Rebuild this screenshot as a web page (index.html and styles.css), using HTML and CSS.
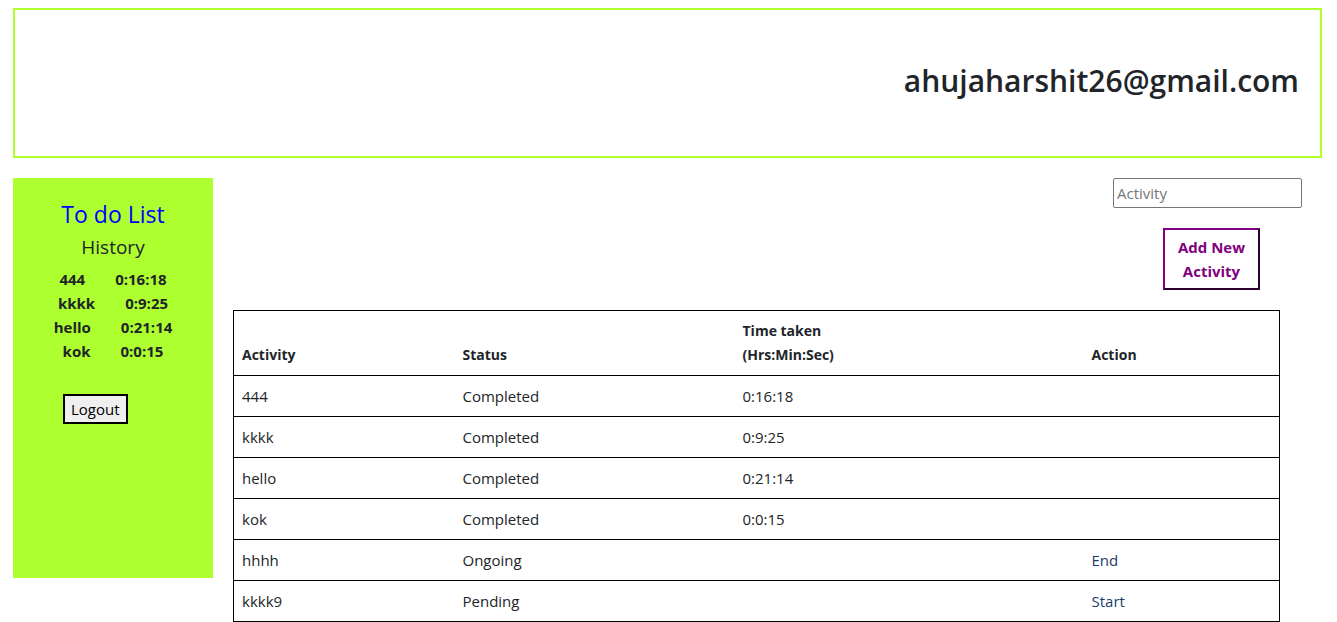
FILE: index.html
```html
<!DOCTYPE html>
<html>
<head>
<meta charset="utf-8">
<link rel="stylesheet" href="styles.css">
</head>
<body>
<header class="top">
  <h1 class="email">ahujaharshit26@gmail.com</h1>
</header>
<div class="layout">
  <aside class="side">
    <h2 class="title">To do List</h2>
    <h3 class="history">History</h3>
    <ul class="hist-list">
      <li><span>444</span><span>0:16:18</span></li>
      <li><span>kkkk</span><span>0:9:25</span></li>
      <li><span>hello</span><span>0:21:14</span></li>
      <li><span>kok</span><span>0:0:15</span></li>
    </ul>
    <button class="logout">Logout</button>
  </aside>
  <main class="main">
    <div class="controls">
      <input class="activity-input" type="text" placeholder="Activity">
      <button class="add-btn">Add New<br>Activity</button>
    </div>
    <table class="tbl">
      <thead>
        <tr>
          <th class="c1">Activity</th>
          <th class="c2">Status</th>
          <th class="c3">Time taken<br>(Hrs:Min:Sec)</th>
          <th class="c4">Action</th>
        </tr>
      </thead>
      <tbody>
        <tr><td>444</td><td>Completed</td><td>0:16:18</td><td></td></tr>
        <tr><td>kkkk</td><td>Completed</td><td>0:9:25</td><td></td></tr>
        <tr><td>hello</td><td>Completed</td><td>0:21:14</td><td></td></tr>
        <tr><td>kok</td><td>Completed</td><td>0:0:15</td><td></td></tr>
        <tr><td>hhhh</td><td>Ongoing</td><td></td><td class="act">End</td></tr>
        <tr><td>kkkk9</td><td>Pending</td><td></td><td class="act">Start</td></tr>
      </tbody>
    </table>
  </main>
</div>
</body>
</html>
```

FILE: styles.css
```css
* { box-sizing: border-box; }
html, body { margin: 0; padding: 0; }
body {
  font-family: "Open Sans", "Noto Sans", sans-serif;
  font-size: 15px;
  line-height: 24px;
  color: #212529;
  background: #fff;
  padding: 8px 15px 0 13px;
}
.top {
  height: 150px;
  border: 2px solid #adff2f;
  display: flex;
  align-items: center;
  justify-content: flex-end;
  padding: 0 21px 4px 0;
}
.email {
  margin: 0;
  font-size: 30px;
  font-weight: 600;
  line-height: 36px;
  letter-spacing: 0;
}
.layout {
  display: flex;
  margin-top: 20px;
  align-items: flex-start;
}
.side {
  width: 200px;
  height: 400px;
  flex: none;
  background: #adff2f;
  text-align: center;
  padding-top: 20px;
}
.title {
  margin: 0;
  font-size: 23px;
  font-weight: 400;
  color: #0000ff;
  line-height: 32px;
}
.history {
  margin: 3px 0 0;
  font-size: 19px;
  font-weight: 400;
  line-height: 28px;
}
.hist-list {
  list-style: none;
  margin: 6px 0 0;
  padding: 0;
  font-weight: 700;
  font-size: 15px;
}
.hist-list li {
  display: flex;
  justify-content: center;
  gap: 30px;
  line-height: 24px;
}
.logout {
  display: block;
  margin: 31px 0 0 50px;
  font-family: inherit;
  font-size: 15px;
  color: #000;
  background: #efefef;
  border: 2px solid #000;
  padding: 2px 6px;
  line-height: 22px;
}
.main {
  flex: 1;
  padding-left: 20px;
}
.controls {
  display: flex;
  flex-direction: column;
  align-items: flex-end;
}
.activity-input {
  width: 189px;
  height: 30px;
  margin-right: 20px;
  border: 1px solid #767676;
  border-radius: 2px;
  font-family: inherit;
  font-size: 15px;
  padding: 1px 3px;
  color: #212529;
}
.activity-input::placeholder { color: #757575; }
.add-btn {
  margin: 20px 62px 0 0;
  width: 97px;
  height: 62px;
  background: #fff;
  color: #800080;
  font-family: inherit;
  font-weight: 700;
  font-size: 15px;
  line-height: 24px;
  border: 2px solid;
  border-color: #800080 #2e0030 #2e0030 #800080;
  padding: 5px 4px;
}
.tbl {
  margin-top: 20px;
  width: 1047px;
  border-collapse: collapse;
  border: 1px solid #000;
}
.tbl th, .tbl td {
  text-align: left;
  padding: 8px;
  vertical-align: bottom;
}
.tbl th { font-weight: 700; font-size: 14px; }
.tbl td { font-size: 15px; }
.tbl tr { border-bottom: 1px solid #000; }
.c1 { width: 221px; }
.c2 { width: 280px; }
.c3 { width: 349px; }
.c4 { width: auto; }
.act { color: #1a3a6e; }
```
